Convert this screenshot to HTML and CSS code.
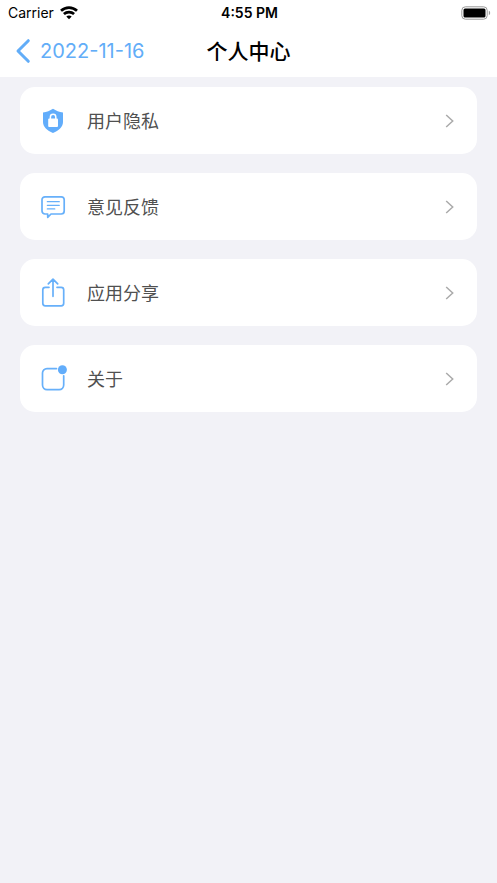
FILE: index.html
```html
<!DOCTYPE html>
<html lang="zh-CN">
<head>
<meta charset="utf-8">
<meta name="viewport" content="width=device-width, initial-scale=1">
<title>个人中心</title>
<link rel="stylesheet" href="styles.css">
</head>
<body>
<header class="top">
  <div class="status">
    <div class="carrier">
      <span>Carrier</span>
      <svg class="wifi" viewBox="0 0 18 14" aria-hidden="true">
        <path d="M1 4.800C5.600.500 12.400.500 17 4.800" />
        <path d="M3.900 8.100c2.900-2.600 7.300-2.600 10.200 0" />
        <path class="solid" d="M9 13.200 6.300 10.500c1.500-1.300 3.900-1.300 5.400 0z" />
      </svg>
    </div>
    <time class="clock">4:55 PM</time>
    <svg class="battery" viewBox="0 0 30 14" aria-hidden="true">
      <rect class="shell" x=".8" y=".8" width="25.4" height="12.4" rx="3.6" />
      <rect x="2.5" y="2.5" width="22" height="9" rx="1.500" />
      <path class="cap" d="M27.8 4.8c1.8.6 1.8 3.8 0 4.4z" />
    </svg>
  </div>
  <nav class="nav">
    <a class="back" href="#">
      <svg class="back-icon" viewBox="0 0 14 24" aria-hidden="true"><path d="M12.3 1.7 2 12l10.3 10.3" /></svg>
      <span>2022-11-16</span>
    </a>
    <h1 class="title">个人中心</h1>
  </nav>
</header>
<main>
  <ul class="list">
    <li>
      <a class="row" href="#">
        <svg class="icon" viewBox="0 0 28 32" aria-hidden="true">
          <path class="fill" d="M14 3.8c3 2 6.200 3.200 10 3.700v9.500c0 5.100-4.300 8.700-10 11-5.700-2.300-10-5.900-10-11V7.500c3.800-.5 7-1.700 10-3.700z" />
          <rect class="lock" x="9.200" y="13.600" width="9.800" height="8.400" rx="1" />
          <path class="shackle" d="M11.400 14.300v-2.400a2.700 2.700 0 0 1 5.400 0v2.400" />
        </svg>
        <span class="label">用户隐私</span>
        <svg class="chevron" viewBox="0 0 9 14" aria-hidden="true"><path d="M1.200 1 7.700 7l-6.500 6" /></svg>
      </a>
    </li>
    <li>
      <a class="row" href="#">
        <svg class="icon" viewBox="0 0 28 32" aria-hidden="true">
          <path d="M6 5.800h16.200a3 3 0 0 1 3 3v11.200a3 3 0 0 1-3 3H12L8.700 26.300v-3.300H6a3 3 0 0 1-3-3V8.800a3 3 0 0 1 3-3z" />
          <path class="thin" d="M8.300 10.700h12M8.300 14.300h12M8.300 17.900h7.500" />
        </svg>
        <span class="label">意见反馈</span>
        <svg class="chevron" viewBox="0 0 9 14" aria-hidden="true"><path d="M1.200 1 7.700 7l-6.500 6" /></svg>
      </a>
    </li>
    <li>
      <a class="row" href="#">
        <svg class="icon" viewBox="0 0 28 32" aria-hidden="true">
          <path d="M10 10.300H6.300a2.500 2.500 0 0 0-2.500 2.500v13.500a2.500 2.500 0 0 0 2.500 2.500h15.900a2.500 2.500 0 0 0 2.500-2.500v-13.500a2.500 2.500 0 0 0-2.500-2.500H18M14 19.300V2.500M9.300 6.800 14 2.100l4.700 4.700" />
        </svg>
        <span class="label">应用分享</span>
        <svg class="chevron" viewBox="0 0 9 14" aria-hidden="true"><path d="M1.200 1 7.700 7l-6.500 6" /></svg>
      </a>
    </li>
    <li>
      <a class="row" href="#">
        <svg class="icon" viewBox="0 0 28 32" aria-hidden="true">
          <path d="M17.500 5.600H8a4.500 4.500 0 0 0-4.500 4.500v12a4.500 4.500 0 0 0 4.500 4.500h12.200a4.500 4.500 0 0 0 4.500-4.500v-9.300" />
          <circle class="fill" cx="23.400" cy="6.800" r="4.500" />
        </svg>
        <span class="label">关于</span>
        <svg class="chevron" viewBox="0 0 9 14" aria-hidden="true"><path d="M1.200 1 7.700 7l-6.500 6" /></svg>
      </a>
    </li>
  </ul>
</main>
</body>
</html>
```
FILE: styles.css
```css
* {
  box-sizing: border-box;
}

body {
  margin: 0;
  min-height: 100vh;
  background: #f2f2f7;
  font-family: Inter, "Noto Sans CJK SC", sans-serif;
}

svg {
  display: block;
  flex: none;
  overflow: visible;
}

a {
  color: inherit;
  text-decoration: none;
}

.top {
  background: #fff;
}

.status,
.nav {
  display: grid;
  grid-template-columns: 1fr auto 1fr;
  align-items: center;
}

.status {
  height: 25px;
  padding: 0 6px 0 8px;
  font-size: 14px;
  color: #000;
}

.carrier {
  display: flex;
  align-items: center;
  gap: 6px;
}

.wifi {
  width: 18px;
  height: 14px;
  fill: none;
  stroke: #000;
  stroke-width: 2.7;
}

.wifi .solid {
  fill: #000;
  stroke: none;
}

.clock {
  font-weight: 600;
}

.battery {
  width: 30px;
  height: 14px;
  justify-self: end;
}

.battery .shell {
  fill: none;
  stroke: #999;
  stroke-width: 1;
}

.battery .cap {
  fill: #999;
}

.nav {
  height: 52px;
  padding: 0 16px;
}

.back {
  display: flex;
  align-items: center;
  gap: 10px;
  font-size: 20px;
  color: #62adf8;
}

.back-icon {
  width: 14px;
  height: 24px;
  fill: none;
  stroke: #62adf8;
  stroke-width: 3;
  stroke-linecap: round;
  stroke-linejoin: round;
}

.title {
  margin: 0;
  padding-top: 2px;
  font-size: 21px;
  line-height: 30px;
  font-weight: 500;
  color: #000;
}

.list {
  display: grid;
  gap: 19px;
  margin: 0;
  padding: 10px 20px;
  list-style: none;
}

.row {
  display: flex;
  align-items: center;
  height: 67px;
  padding: 0 23px 0 19px;
  border-radius: 15px;
  background: #fff;
}

.icon {
  width: 28px;
  height: 32px;
  fill: none;
  stroke: #67b0fa;
  stroke-width: 1.7;
  stroke-linecap: round;
  stroke-linejoin: round;
}

.icon .fill {
  fill: #62adfb;
  stroke: none;
}

.icon .lock {
  fill: #fff;
  stroke: none;
}

.icon .shackle {
  stroke: #fff;
  stroke-width: 1.500;
}

.icon .thin {
  stroke-width: 1.200;
}

.label {
  flex: 1;
  margin-left: 20px;
  padding-top: 2px;
  font-size: 18px;
  line-height: 26px;
  color: #505050;
}

.chevron {
  width: 9px;
  height: 14px;
  fill: none;
  stroke: #aaa;
  stroke-width: 1.500;
}
```
